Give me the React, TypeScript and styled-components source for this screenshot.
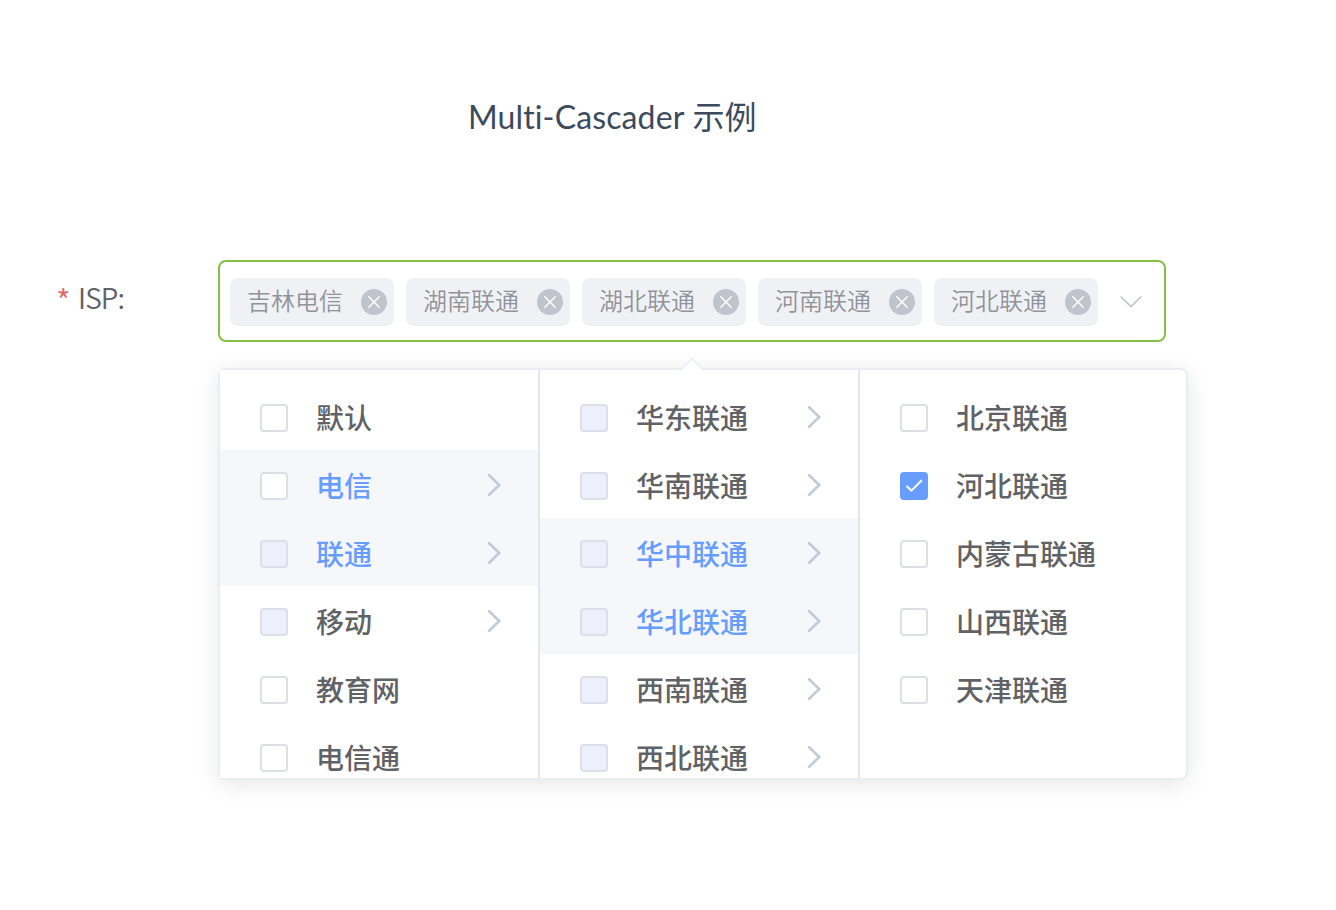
import React from 'react';
import styled, { createGlobalStyle } from 'styled-components';

const GlobalStyle = createGlobalStyle`
  * { box-sizing: border-box; }
  body { margin: 0; background: #fff; overflow: hidden; }
`;

const Page = styled.main`
  width: 1336px;
  height: 910px;
  overflow: hidden;
  background: #fff;
  font-family: "Noto Sans CJK SC", sans-serif;
  color: #606266;
`;

const Title = styled.h1`
  display: flex;
  align-items: center;
  gap: 8px;
  height: 48px;
  margin: 93px 0 0 468px;
  color: #3b4a5c;
  font-size: 32px;
  font-weight: 400;
  line-height: 48px;
  white-space: nowrap;
`;

const Latin = styled.span`
  font-family: Lato, sans-serif;
  letter-spacing: 0.13px;
`;

const Han = styled.span`
  padding-bottom: 4px;
`;

const FormItem = styled.div`
  display: flex;
  align-items: flex-start;
  margin-top: 119px;
`;

const Label = styled.label`
  display: flex;
  gap: 7px;
  width: 218px;
  padding-left: 56px;
  font-size: 28px;
  font-weight: 350;
  letter-spacing: -0.9px;
  line-height: 74px;
`;

const Required = styled.span`
  width: 15px;
  color: #e06c6c;
  font-size: 32px;
  line-height: 78px;
`;

const Field = styled.div`
  width: 970px;
`;

const Input = styled.div`
  display: flex;
  align-items: center;
  gap: 12px;
  width: 948px;
  height: 82px;
  padding: 2px 22px 0 10px;
  border: 2px solid #85c140;
  border-radius: 8px;
`;

const Tag = styled.span`
  display: flex;
  align-items: center;
  justify-content: space-between;
  width: 164px;
  height: 48px;
  padding: 0 7px 0 17px;
  border-radius: 8px;
  background: #f0f1f5;
  color: #909399;
  font-size: 24px;
  font-weight: 350;
  line-height: 44px;
  white-space: nowrap;
`;

const TagText = styled.span`
  padding-bottom: 4px;
`;

const DropIcon = styled.svg`
  display: block;
  margin-left: auto;
`;

const Panel = styled.div`
  position: relative;
  display: flex;
  width: 970px;
  height: 412px;
  margin-top: 26px;
  border: 2px solid #e8ecf3;
  border-radius: 8px;
  background: #fff;
  box-shadow: 0 4px 24px rgba(0, 0, 0, 0.1);
`;

const Arrow = styled.svg`
  position: absolute;
  top: -12px;
  left: 460px;
`;

const Menu = styled.ul`
  flex: 0 0 320px;
  height: 408px;
  margin: 0;
  padding: 12px 0 0;
  overflow: hidden;
  list-style: none;
  background: #fff;
  border-right: 2px solid #e4e6ec;

  &:last-child {
    flex: 1;
    border-right: 0;
    border-radius: 6px;
  }
`;

const Row = styled.li<{ $active?: boolean }>`
  display: flex;
  align-items: center;
  height: 68px;
  padding: 4px 36px 0 40px;
  background: ${p => (p.$active ? '#f5f7fb' : 'transparent')};
  color: ${p => (p.$active ? '#669dff' : '#606266')};
  font-size: 28px;
  font-weight: 500;
  line-height: 62px;
`;

const Check = styled.span<{ $state: State }>`
  display: flex;
  align-items: center;
  justify-content: center;
  width: 28px;
  height: 28px;
  margin-right: 28px;
  border: 2px solid ${p => (p.$state === 'checked' ? '#669dff' : '#dcdfe6')};
  border-radius: 4px;
  background: ${p => (p.$state === 'checked' ? '#669dff' : p.$state === 'partial' ? '#edf0fc' : '#fff')};
`;

const RowText = styled.span`
  flex: 1;
  padding-bottom: 2px;
  white-space: nowrap;
`;

const ChevronSvg = styled.svg`
  margin-top: -2px;
`;

type State = 'empty' | 'partial' | 'checked';
type Item = { label: string; state?: State; active?: boolean; more?: boolean };

const tags = ['吉林电信', '湖南联通', '湖北联通', '河南联通', '河北联通'];

const menus: Item[][] = [
  [
    { label: '默认' },
    { label: '电信', active: true, more: true },
    { label: '联通', state: 'partial', active: true, more: true },
    { label: '移动', state: 'partial', more: true },
    { label: '教育网' },
    { label: '电信通' },
  ],
  [
    { label: '华东联通', state: 'partial', more: true },
    { label: '华南联通', state: 'partial', more: true },
    { label: '华中联通', state: 'partial', active: true, more: true },
    { label: '华北联通', state: 'partial', active: true, more: true },
    { label: '西南联通', state: 'partial', more: true },
    { label: '西北联通', state: 'partial', more: true },
  ],
  [
    { label: '北京联通' },
    { label: '河北联通', state: 'checked' },
    { label: '内蒙古联通' },
    { label: '山西联通' },
    { label: '天津联通' },
  ],
];

const CloseIcon = () => (
  <svg width="26" height="26" viewBox="0 0 26 26">
    <circle cx="13" cy="13" r="13" fill="#c0c4cc" />
    <path d="M7.3 7.3 18.7 18.7M18.7 7.3 7.3 18.7" stroke="#fff" strokeWidth="1.4" />
  </svg>
);

const Chevron = () => (
  <ChevronSvg width="16" height="24" viewBox="0 0 16 24" fill="none">
    <path d="M3.2 2.2 13.2 12 3.2 21.8" stroke="#c0cad8" strokeWidth="2.6" strokeLinecap="round" />
  </ChevronSvg>
);

export default function App() {
  return (
    <Page>
      <GlobalStyle />
      <Title>
        <Latin>Multi-Cascader</Latin>
        <Han>示例</Han>
      </Title>
      <FormItem>
        <Label>
          <Required>*</Required>
          <span>ISP:</span>
        </Label>
        <Field>
          <Input>
            {tags.map(tag => (
              <Tag key={tag}>
                <TagText>{tag}</TagText>
                <CloseIcon />
              </Tag>
            ))}
            <DropIcon width="22" height="14" viewBox="0 0 22 14" fill="none">
              <path d="M1.2 2 11 11.5 20.8 2" stroke="#c0c4cc" strokeWidth="1.7" strokeLinecap="round" />
            </DropIcon>
          </Input>
          <Panel>
            <Arrow width="24" height="14" viewBox="0 0 24 14">
              <path d="M1 12 12 1 23 12V14H1Z" fill="#fff" />
              <path d="M1 11.5 12 1 23 11.5" stroke="#e8ecf3" strokeWidth="1.5" fill="none" />
            </Arrow>
            {menus.map((items, index) => (
              <Menu key={index}>
                {items.map(({ label, state = 'empty', active, more }) => (
                  <Row key={label} $active={active}>
                    <Check $state={state}>
                      {state === 'checked' && (
                        <svg width="18" height="14" viewBox="0 0 18 14" fill="none">
                          <path d="M1.5 7 6.4 11.6 16.8 1.3" stroke="#fff" strokeWidth="2" />
                        </svg>
                      )}
                    </Check>
                    <RowText>{label}</RowText>
                    {more && <Chevron />}
                  </Row>
                ))}
              </Menu>
            ))}
          </Panel>
        </Field>
      </FormItem>
    </Page>
  );
}
